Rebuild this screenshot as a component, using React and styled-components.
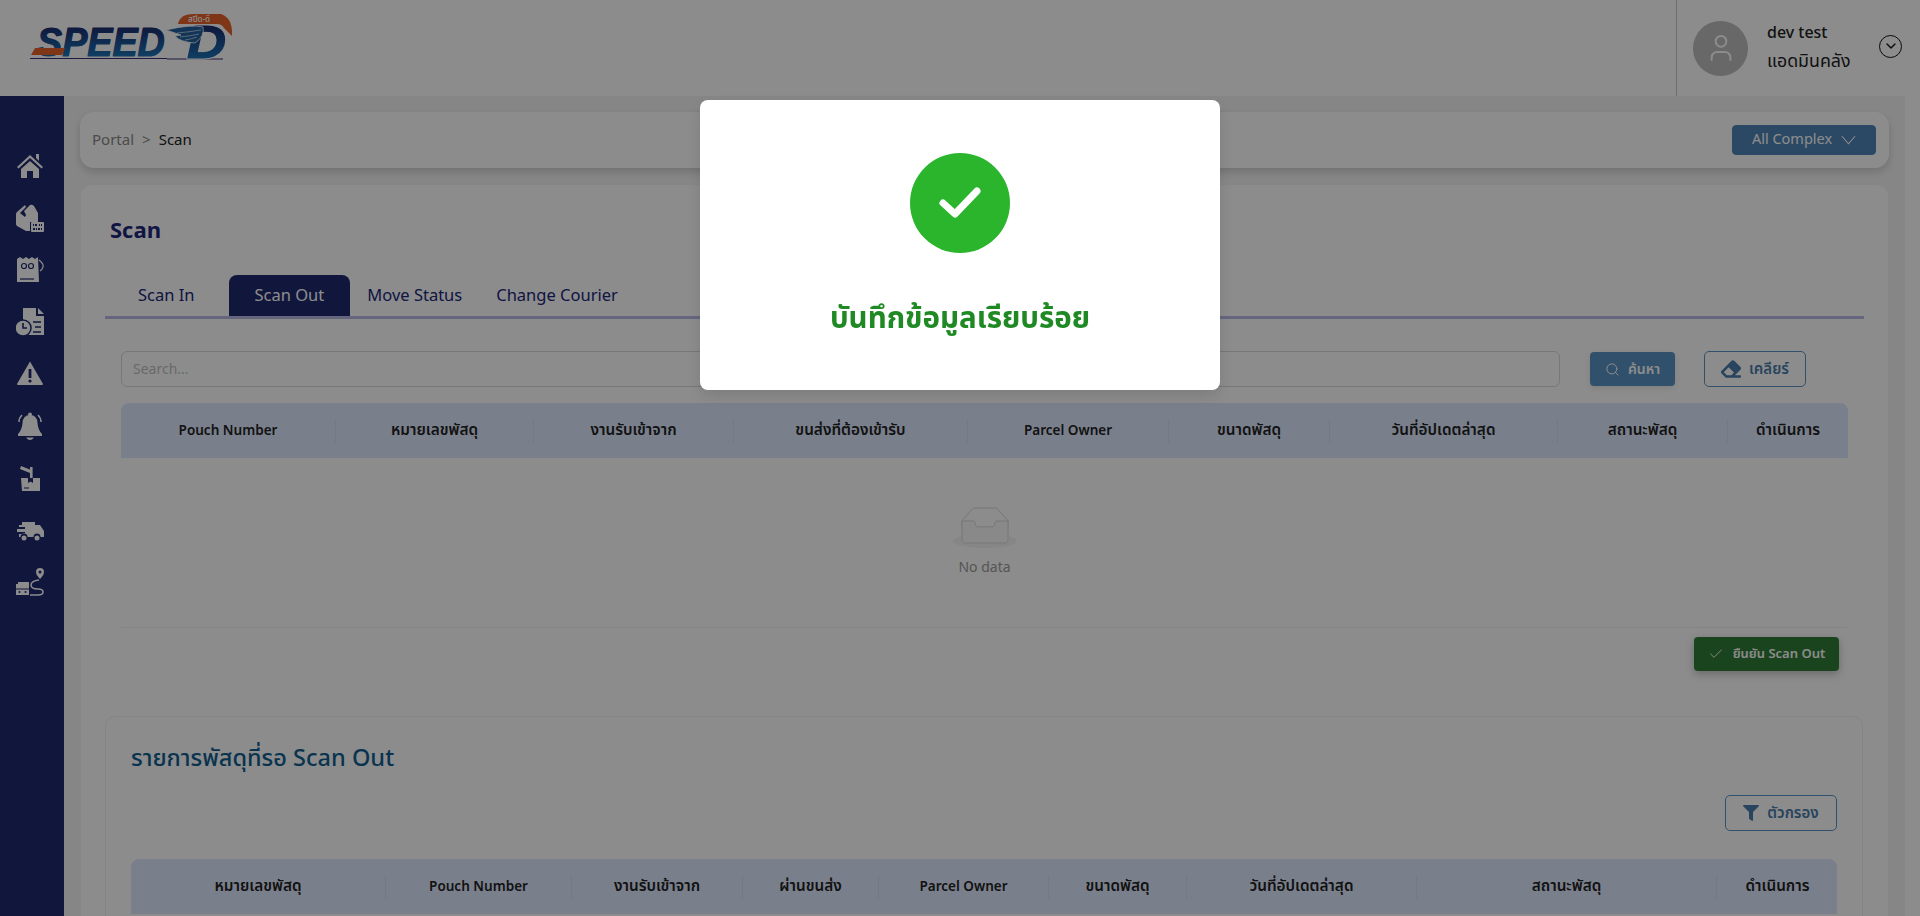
import React from "react";
import styled, { createGlobalStyle } from "styled-components";
import { FaEraser, FaFilter } from "react-icons/fa";
import { Search, Check, ChevronDown, User } from "lucide-react";

const FONT = `"Noto Sans Thai", "Noto Sans", "Open Sans", sans-serif`;
const NAVY = "#1e296e";

const Global = createGlobalStyle`
  html, body { margin: 0; padding: 0; height: 100%; overflow: hidden; background: #fff; }
  * { box-sizing: border-box; }
  body { font-family: ${FONT}; color: #222; }
`;

const Page = styled.div`display:flex;flex-direction:column;height:916px;overflow:hidden;`;
const Header = styled.header`display:flex;justify-content:space-between;height:96px;flex:none;background:#fff;`;
const LogoBox = styled.div`padding:14px 0 0 27px;`;
const LogoSvg = styled.svg`display:block;overflow:visible;`;
const UserArea = styled.div`display:flex;align-items:center;width:244px;border-left:1px solid #c9c9c9;padding:0 0 0 16px;`;
const Avatar = styled.div`width:55px;height:55px;border-radius:50%;background:#bdbdbd;display:flex;align-items:center;justify-content:center;color:#fff;`;
const UserText = styled.div`margin-left:19px;display:flex;flex-direction:column;gap:5px;color:#222;line-height:24px;margin-top:-1px;`;
const UserName = styled.div`font-size:16px;font-weight:500;`;
const UserRole = styled.div`font-size:17.8px;font-weight:400;`;
const Chevron = styled.div`width:23px;height:23px;border:1.5px solid #111;border-radius:50%;margin-left:auto;margin-right:18px;margin-top:-4px;display:flex;align-items:center;justify-content:center;color:#111;`;

const Body = styled.div`display:flex;flex:1;min-height:0;`;
const Sidebar = styled.nav`width:64px;flex:none;background:${NAVY};display:flex;flex-direction:column;align-items:center;padding:56px 4px 0 0;gap:24px;`;
const NavIcon = styled.svg`width:28px;height:28px;display:block;color:#fff;flex:none;`;
const Content = styled.main`flex:1;margin-right:15px;background:#f5f5f5;padding:16px;min-width:0;overflow:hidden;`;

const Crumbs = styled.div`height:56px;background:#fff;border-radius:14px;box-shadow:0 4px 8px rgba(0,0,0,.16);display:flex;align-items:center;justify-content:space-between;padding:0 13px 0 12px;`;
const CrumbTrail = styled.div`display:flex;gap:8px;font-size:15px;color:#8a8a8a;`;
const CrumbNow = styled.span`color:#222;`;
const ComplexBtn = styled.button`width:144px;height:30px;background:#4f86b8;border:1px solid #4f86b8;border-radius:4px;color:#fff;font:400 14.5px ${FONT};display:flex;align-items:center;justify-content:center;gap:9px;padding:0;`;

const Card = styled.section`background:#fff;border-radius:12px;margin:17px 1px 0;padding:24px 24px 0;height:760px;`;
const Title = styled.h1`margin:0;font-size:22px;line-height:46px;font-weight:700;color:#20277a;padding-left:5px;height:66px;`;
const TabBar = styled.div`display:flex;height:44px;border-bottom:3px solid #b8bbe6;padding-left:16px;`;
const Tab = styled.div`
  height:41px;display:flex;align-items:center;font-size:16.5px;
  padding:${p => (p.$active ? "0 26px" : "0 17px")};
  margin-left:${p => (p.$active ? "17px" : "0")};
  background:${p => (p.$active ? NAVY : "transparent")};
  color:${p => (p.$active ? "#fff" : "#20277a")};
  border-radius:${p => (p.$active ? "8px 8px 0 0" : "0")};
`;
const Panel = styled.div`padding:32px 16px 0;`;
const SearchRow = styled.div`display:flex;align-items:center;height:36px;padding-right:42px;`;
const Input = styled.div`flex:1;height:36px;border:1px solid #d9d9d9;border-radius:6px;background:#fff;color:#bfbfbf;font-size:14px;display:flex;align-items:center;padding:0 11px;`;
const SearchBtn = styled.button`margin-left:30px;width:85px;height:34px;border:0;border-radius:4px;background:#5a93c4;color:#fff;font:600 14px ${FONT};display:flex;align-items:center;justify-content:center;gap:8px;padding:0;box-shadow:0 2px 6px rgba(0,0,0,.1);`;
const OutlineBtn = styled.button`
  width:${p => p.$w}px;height:36px;border:1px solid #5a93c4;border-radius:5px;background:#fff;color:#4a7cab;
  margin-left:${p => p.$ml || 0}px;
  font:600 15px ${FONT};display:flex;align-items:center;justify-content:center;gap:8px;padding:0;
`;
const HeadRow = styled.div`
  display:grid;grid-template-columns:${p => p.$cols};align-items:center;height:${p => p.$h}px;margin-top:${p => p.$mt}px;
  background:#dee8ff;border-radius:8px 8px 0 0;
`;
const HeadCell = styled.div`
  height:24px;display:flex;align-items:center;justify-content:center;font-weight:600;color:#222;white-space:nowrap;
  font-size:${p => (p.$latin ? "13.5px" : "15.3px")};
  border-right:${p => (p.$last ? "0" : "1px solid #d3dcf0")};
`;
const Empty = styled.div`height:170px;border-bottom:1px solid #eee;display:flex;flex-direction:column;align-items:center;padding-top:49px;color:#9b9b9b;font-size:14px;`;
const EmptyText = styled.div`margin-top:10px;line-height:20px;`;
const ConfirmRow = styled.div`display:flex;justify-content:flex-end;padding:9px 9px 0 0;`;
const ConfirmBtn = styled.button`width:145px;height:34px;border:0;border-radius:4px;background:#2f7d36;color:#fff;font:600 13px ${FONT};display:flex;align-items:center;justify-content:center;gap:9px;padding:0;box-shadow:0 3px 8px rgba(0,0,0,.25);`;
const SubCard = styled.div`margin-top:45px;margin-right:1px;border:1px solid #f0f0f0;border-radius:10px;padding:26px 25px 0;height:240px;`;
const SubTitle = styled.h2`margin:0;font-size:23.5px;line-height:32px;font-weight:500;color:#125f92;`;
const FilterRow = styled.div`display:flex;justify-content:flex-end;margin-top:20px;`;

const Overlay = styled.div`position:fixed;inset:0;background:rgba(0,0,0,.45);`;
const Modal = styled.div`position:fixed;left:700px;top:100px;width:520px;height:290px;background:#fff;border-radius:8px;box-shadow:0 6px 16px rgba(0,0,0,.12);display:flex;flex-direction:column;align-items:center;padding-top:53px;`;
const Circle = styled.div`width:100px;height:100px;border-radius:50%;background:#2ab52c;display:flex;align-items:center;justify-content:center;`;
const ModalText = styled.div`margin-top:46px;font-size:29.5px;line-height:40px;font-weight:700;color:#1f8a24;`;

const Logo = () => (
  <LogoSvg width="208" height="48" viewBox="0 0 208 48">
    <defs>
      <linearGradient id="lg" x1="0" y1="0" x2="0" y2="1">
        <stop offset="0.1" stopColor="#1a2466" />
        <stop offset="1" stopColor="#1d86c8" />
      </linearGradient>
    </defs>
    <path d="M151 10 Q153 0 166 0 L194 0 Q206 4 205 22 L197 14 Q195 10 190 10 Z" fill="#e8632a" />
    <path d="M3 44.500 H140 M140 45 H196" stroke="#3a2f7c" strokeWidth="1.200" />
    <g fontFamily="'Liberation Sans',sans-serif" fontWeight="700" fontStyle="italic" fontSize="41" fill="url(#lg)" strokeLinejoin="round">
      <text transform="translate(10 42) scale(.92 1)" stroke="#fff" strokeWidth="3.500" paintOrder="stroke">SPEED</text>
      <text transform="translate(10 42) scale(.92 1)" stroke="url(#lg)" strokeWidth="1.100">SPEED</text>
      <text transform="translate(160 44) scale(1.32 1.12)" stroke="#fff" strokeWidth="3" paintOrder="stroke">D</text>
      <text transform="translate(160 44) scale(1.32 1.12)" stroke="url(#lg)" strokeWidth="1">D</text>
    </g>
    <text x="161" y="8" fontSize="8" fill="#fff" fontFamily={FONT} fontWeight="500">สปีด-ดี</text>
    <path d="M4 41 L8 34 L38 34 L35 41 Z" fill="#e8632a" />
    <path d="M139 16 Q165 10 176 13 Q178 22 168 29 Q153 28 148 22 L154 21 Z" fill="#1f5f9e" stroke="#fff" strokeWidth=".8" />
    <path d="M150 19 Q162 18 174 16 M153 23 Q164 22 172 20 M158 26 Q165 25 170 23" stroke="#fff" strokeWidth=".6" fill="none" />
  </LogoSvg>
);

const Home = () => (
  <NavIcon viewBox="0 0 28 28" fill="currentColor">
    <path d="M14 3 L27 15 L25.500 16.500 L14 6 L2.500 16.500 L1 15 Z" />
    <path d="M20 2h3v7l-3-3z" />
    <path d="M5 17 L14 9 L23 17 V26 H17 V19 H11 V26 H5 Z" />
  </NavIcon>
);
const BoxCode = () => (
  <NavIcon viewBox="0 0 28 28" fill="currentColor">
    <path d="M9 1 L1 8 Q0 9 0 10 V20 Q0 21 1 22 L10 27 H14 V18 H22 V9 L18 2 Q16 0 14 1 L8 7 L10 11 L9 13 L4 9 L10 3 Z" />
    <rect x="15" y="18" width="13" height="10" rx="1" />
    <path d="M17 20h1v2h-1zM19 20h2v2h-2zM23 20h1v2h-1zM25 20h1v2h-1zM17 24h2v2h-2zM20 24h1v2h-1zM22 24h2v2h-2zM25 24h1v2h-1z" fill={NAVY} />
  </NavIcon>
);
const Pouch = () => (
  <NavIcon viewBox="0 0 28 28" fill="currentColor">
    <path d="M1 3 L4 1 L7 3 L10 1 L13 3 L16 1 L19 3 L22 1 L23 26 H1 Z" />
    <path d="M4 23h14" stroke={NAVY} strokeWidth="1.200" />
    <circle cx="8" cy="10" r="2.500" fill="none" stroke={NAVY} strokeWidth="1.200" />
    <circle cx="15" cy="10" r="2.500" fill="none" stroke={NAVY} strokeWidth="1.200" />
    <path d="M23 4 Q28 8 27 11 Q26 14 24 15" fill="none" stroke="currentColor" strokeWidth="1.200" />
  </NavIcon>
);
const DocClock = () => (
  <NavIcon viewBox="0 0 28 28" fill="currentColor">
    <path d="M7 0 H20 V8 H28 V27 H12 V14 H7 Z" />
    <path d="M22 0 L28 6 H22 Z" />
    <path d="M17 14h8M19 19h6M17 24h8" stroke={NAVY} strokeWidth="1.600" />
    <circle cx="7" cy="20" r="8" stroke={NAVY} strokeWidth="1.500" />
    <path d="M7 15 V20 H11" stroke={NAVY} strokeWidth="1.600" fill="none" />
  </NavIcon>
);
const Warn = () => (
  <NavIcon viewBox="0 0 28 28" fill="currentColor">
    <path d="M14 1.500 L27 24 Q27 25 26 25 H2 Q1 25 1 24 Z" />
    <rect x="12.600" y="9" width="2.800" height="9" fill={NAVY} />
    <circle cx="14" cy="21" r="1.600" fill={NAVY} />
  </NavIcon>
);
const Bell = () => (
  <NavIcon viewBox="0 0 28 28" fill="currentColor">
    <circle cx="14" cy="2.500" r="2" />
    <path d="M14 3 Q21 3 21.500 11 Q22 18 26 22 V24 H2 V22 Q6 18 6.500 11 Q7 3 14 3Z" />
    <path d="M10 25.500 H18 Q16 28 14 28 Q12 28 10 25.500Z" />
    <path d="M3 10 Q3 6 6 3M25 10 Q25 6 22 3" stroke="currentColor" strokeWidth="1.500" fill="none" />
  </NavIcon>
);
const Hammer = () => (
  <NavIcon viewBox="0 0 28 28" fill="currentColor">
    <path d="M5 2 L15 6 L14 9 L4 5 Z" />
    <rect x="14" y="3" width="2.600" height="11" />
    <path d="M5 14 H24 V27 H6 Z" />
    <path d="M12 14 v5 l2.500-1.500 l2.500 1.500 v-5" fill={NAVY} />
    <path d="M8 24h5" stroke={NAVY} strokeWidth="1" />
  </NavIcon>
);
const Van = () => (
  <NavIcon viewBox="0 0 28 28" fill="currentColor">
    <path d="M6 6 H19 V9 H24 L28 15 V21 H24.500 A3.500 3.500 0 0 0 17.500 21 H11.500 A3.500 3.500 0 0 0 4.500 21 H3 V18 H9 V16 H1 V13 H9 V11 H3 V9 H6 Z" />
    <circle cx="8" cy="22" r="2.500" />
    <circle cx="21" cy="22" r="2.500" />
  </NavIcon>
);
const RouteIcon = () => (
  <NavIcon viewBox="0 0 28 28" fill="currentColor">
    <path d="M24 0 a4 4 0 0 1 4 4 Q28 7 24 11 Q20 7 20 4 a4 4 0 0 1 4-4z" />
    <circle cx="24" cy="4" r="1.500" fill={NAVY} />
    <path d="M23 12 Q15 13 15 17 Q15 21 22 21 Q27 21 27 24 Q27 27 22 27 H14" fill="none" stroke="currentColor" strokeWidth="1.500" />
    <path d="M0 16 H2 V14 H13 V27 H0 Z" />
    <path d="M0 21 H13" stroke={NAVY} strokeWidth="1" />
    <circle cx="3.500" cy="24" r="1" fill={NAVY} />
    <circle cx="9.500" cy="24" r="1" fill={NAVY} />
  </NavIcon>
);

const TOP = ["Pouch Number", "หมายเลขพัสดุ", "งานรับเข้าจาก", "ขนส่งที่ต้องเข้ารับ", "Parcel Owner", "ขนาดพัสดุ", "วันที่อัปเดตล่าสุด", "สถานะพัสดุ", "ดำเนินการ"];
const BOTTOM = ["หมายเลขพัสดุ", "Pouch Number", "งานรับเข้าจาก", "ผ่านขนส่ง", "Parcel Owner", "ขนาดพัสดุ", "วันที่อัปเดตล่าสุด", "สถานะพัสดุ", "ดำเนินการ"];

const Head = ({ items, cols, mt, h }) => (
  <HeadRow $cols={cols} $mt={mt} $h={h}>
    {items.map((t, i) => (
      <HeadCell key={t} $latin={/^[A-Za-z ]+$/.test(t)} $last={i === items.length - 1}>{t}</HeadCell>
    ))}
  </HeadRow>
);

const EmptyIcon = () => (
  <svg width="64" height="41" viewBox="0 0 64 41">
    <g transform="translate(0 1)" fill="none" fillRule="evenodd">
      <ellipse fill="#f5f5f5" cx="32" cy="33" rx="32" ry="7" />
      <g fillRule="nonzero" stroke="#d9d9d9">
        <path d="M55 12.76L44.854 1.258C44.367.474 43.656 0 42.907 0H21.093c-.749 0-1.46.474-1.947 1.257L9 12.761V22h46v-9.24z" />
        <path d="M41.613 15.931c0-1.605.994-2.93 2.227-2.931H55v18.137C55 33.26 53.68 35 52.05 35h-40.1C10.32 35 9 33.259 9 31.137V13h11.16c1.233 0 2.227 1.323 2.227 2.928v.022c0 1.605 1.005 2.901 2.237 2.901h14.752c1.232 0 2.237-1.308 2.237-2.913v-.007z" fill="#fafafa" />
      </g>
    </g>
  </svg>
);

const WideChevron = () => (
  <svg width="15" height="10" viewBox="0 0 16 10" fill="none">
    <path d="M1 1 L8 9 L15 1" stroke="currentColor" strokeWidth="1.200" />
  </svg>
);

export default function App() {
  return (
    <>
      <Global />
      <Page>
        <Header>
          <LogoBox><Logo /></LogoBox>
          <UserArea>
            <Avatar><User size={32} strokeWidth={1.5} /></Avatar>
            <UserText>
              <UserName>dev test</UserName>
              <UserRole>แอดมินคลัง</UserRole>
            </UserText>
            <Chevron><ChevronDown size={16} strokeWidth={2} /></Chevron>
          </UserArea>
        </Header>
        <Body>
          <Sidebar>
            <Home /><BoxCode /><Pouch /><DocClock /><Warn /><Bell /><Hammer /><Van /><RouteIcon />
          </Sidebar>
          <Content>
            <Crumbs>
              <CrumbTrail><span>Portal</span><span>&gt;</span><CrumbNow>Scan</CrumbNow></CrumbTrail>
              <ComplexBtn>All Complex <WideChevron /></ComplexBtn>
            </Crumbs>
            <Card>
              <Title>Scan</Title>
              <TabBar>
                <Tab>Scan In</Tab>
                <Tab $active>Scan Out</Tab>
                <Tab>Move Status</Tab>
                <Tab>Change Courier</Tab>
              </TabBar>
              <Panel>
                <SearchRow>
                  <Input>Search...</Input>
                  <SearchBtn><Search size={15} strokeWidth={1.6} />ค้นหา</SearchBtn>
                  <OutlineBtn $w={102} $ml={29}><FaEraser size={20} />เคลียร์</OutlineBtn>
                </SearchRow>
                <Head items={TOP} cols="215px 198px 200px 234px 201px 161px 228px 170px 120px" mt={16} h={55} />
                <Empty><EmptyIcon /><EmptyText>No data</EmptyText></Empty>
                <ConfirmRow><ConfirmBtn><Check size={16} strokeWidth={1.4} />ยืนยัน Scan Out</ConfirmBtn></ConfirmRow>
              </Panel>
              <SubCard>
                <SubTitle>รายการพัสดุที่รอ Scan Out</SubTitle>
                <FilterRow><OutlineBtn $w={112}><FaFilter size={16} />ตัวกรอง</OutlineBtn></FilterRow>
                <Head items={BOTTOM} cols="255px 186px 171px 136px 170px 138px 230px 300px 121px" mt={28} h={55} />
              </SubCard>
            </Card>
          </Content>
        </Body>
      </Page>
      <Overlay />
      <Modal>
        <Circle>
          <svg width="46" height="46" viewBox="0 0 46 46" fill="none">
            <path d="M6 23 L18 34 L40 11" stroke="#fff" strokeWidth="7" strokeLinecap="round" strokeLinejoin="round" />
          </svg>
        </Circle>
        <ModalText>บันทึกข้อมูลเรียบร้อย</ModalText>
      </Modal>
    </>
  );
}
